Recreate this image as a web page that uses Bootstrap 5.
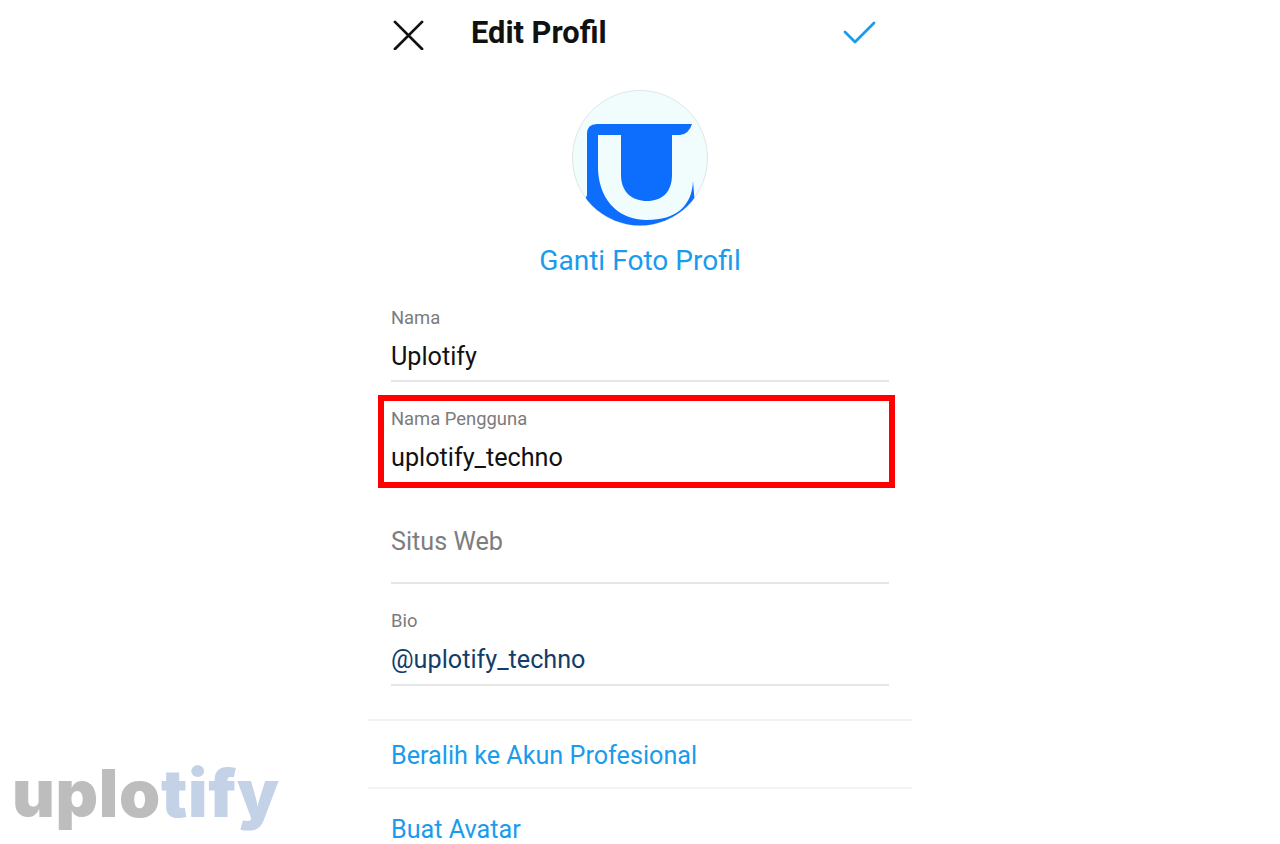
<!DOCTYPE html>
<html lang="id">
<head>
<meta charset="utf-8">
<title>Edit Profil</title>
<link href="https://cdn.jsdelivr.net/npm/bootstrap@5.3.0/dist/css/bootstrap.min.css" rel="stylesheet">
<style>
html,body{height:844px;overflow:hidden;background:#fff;}
body{font-family:Roboto,"Liberation Sans",sans-serif;position:relative;}
.phone-col{width:544px;margin:0 auto;}
.top-bar{height:70px;padding-left:25px;padding-right:36px;}
.top-close{margin-bottom:2px;}
.top-check{margin-bottom:4px;}
.top-title{font-size:30.8px;font-weight:700;color:#111;margin-left:47px;margin-bottom:3px;line-height:1;}
.avatar-box{margin-top:20px;height:136px;}
.change-link{font-size:28.1px;color:#1a9bec;line-height:32px;margin-top:19px;text-align:center;}
.field-stack{margin-top:31px;padding:0 23px;}
.field-item{position:relative;border-bottom:2px solid #e6e6e6;}
.field-label{font-size:18.4px;line-height:20px;color:#7b7b7b;}
.field-value{font-size:25.2px;line-height:30px;color:#111;margin-top:14px;}
.field-name{height:74px;}
.field-user{height:93px;margin:13px -6px 0 -13px;padding:0 0 0 7px;border:6px solid #f00;}
.field-user .field-label{margin-top:8px;}
.field-site{height:96px;border-bottom:2px solid #e6e6e6;padding-top:39px;}
.field-site .field-value{color:#7d7d7d;margin:0;}
.field-bio{height:102px;padding-top:27px;}
.field-bio .field-value{color:#123d6b;}
.menu-stack{margin-top:33px;border-top:2px solid #f3f3f3;}
.menu-row{height:68px;padding:4px 23px 0;border-bottom:2px solid #f3f3f3;font-size:25.2px;color:#1a9bec;}
.menu-row:last-child{border-bottom:0;padding-top:14px;}
.water-mark{position:absolute;left:12px;top:750px;font-family:Inter,sans-serif;font-weight:900;font-size:66px;line-height:86px;color:#bdbdbd;letter-spacing:.7px;}
.water-mark span{color:#c4d2e8;}
</style>
</head>
<body>
<div class="phone-col">
  <div class="top-bar d-flex align-items-center">
    <svg class="top-close" width="31" height="31" viewBox="0 0 32 32" fill="none" stroke="#111" stroke-width="2.8" stroke-linecap="round"><path d="M2 3 L30 31 M30 3 L2 31"/></svg>
    <div class="top-title flex-grow-1">Edit Profil</div>
    <svg class="top-check" width="33" height="24" viewBox="0 0 33 24" fill="none" stroke="#1a9bec" stroke-width="2.8" stroke-linecap="round" stroke-linejoin="round"><path d="M2 11 L12 21 L31 2"/></svg>
  </div>
  <div class="avatar-box d-flex justify-content-center">
    <svg width="136" height="136" viewBox="0 0 136 136">
      <defs><clipPath id="avatarClip"><circle cx="68" cy="68" r="67.5"/></clipPath></defs>
      <circle cx="68" cy="68" r="67.5" fill="#f1fdfd" stroke="#dfe6e6"/>
      <g clip-path="url(#avatarClip)" fill="#0d6efd">
        <path d="M15 44 Q15 34 25 34 H120 Q117 44 108 45 H26 V80 C28 114 50 130 75 130 C104 130 120 116 121 91 L125 140 L0 140 L15 105 Z"/>
        <path d="M49 45 V85 C49 102 60 111 75 111 C90 111 100 102 100 85 V45 Z"/>
      </g>
    </svg>
  </div>
  <div class="change-link">Ganti Foto Profil</div>
  <div class="field-stack">
    <div class="field-item field-name">
      <div class="field-label">Nama</div>
      <div class="field-value">Uplotify</div>
    </div>
    <div class="field-user">
      <div class="field-label">Nama Pengguna</div>
      <div class="field-value">uplotify_techno</div>
    </div>
    <div class="field-site">
      <div class="field-value">Situs Web</div>
    </div>
    <div class="field-item field-bio">
      <div class="field-label">Bio</div>
      <div class="field-value">@uplotify_techno</div>
    </div>
  </div>
  <div class="menu-stack">
    <div class="menu-row d-flex align-items-center">Beralih ke Akun Profesional</div>
    <div class="menu-row d-flex align-items-center">Buat Avatar</div>
  </div>
</div>
<div class="water-mark">uplo<span>tify</span></div>
</body>
</html>
